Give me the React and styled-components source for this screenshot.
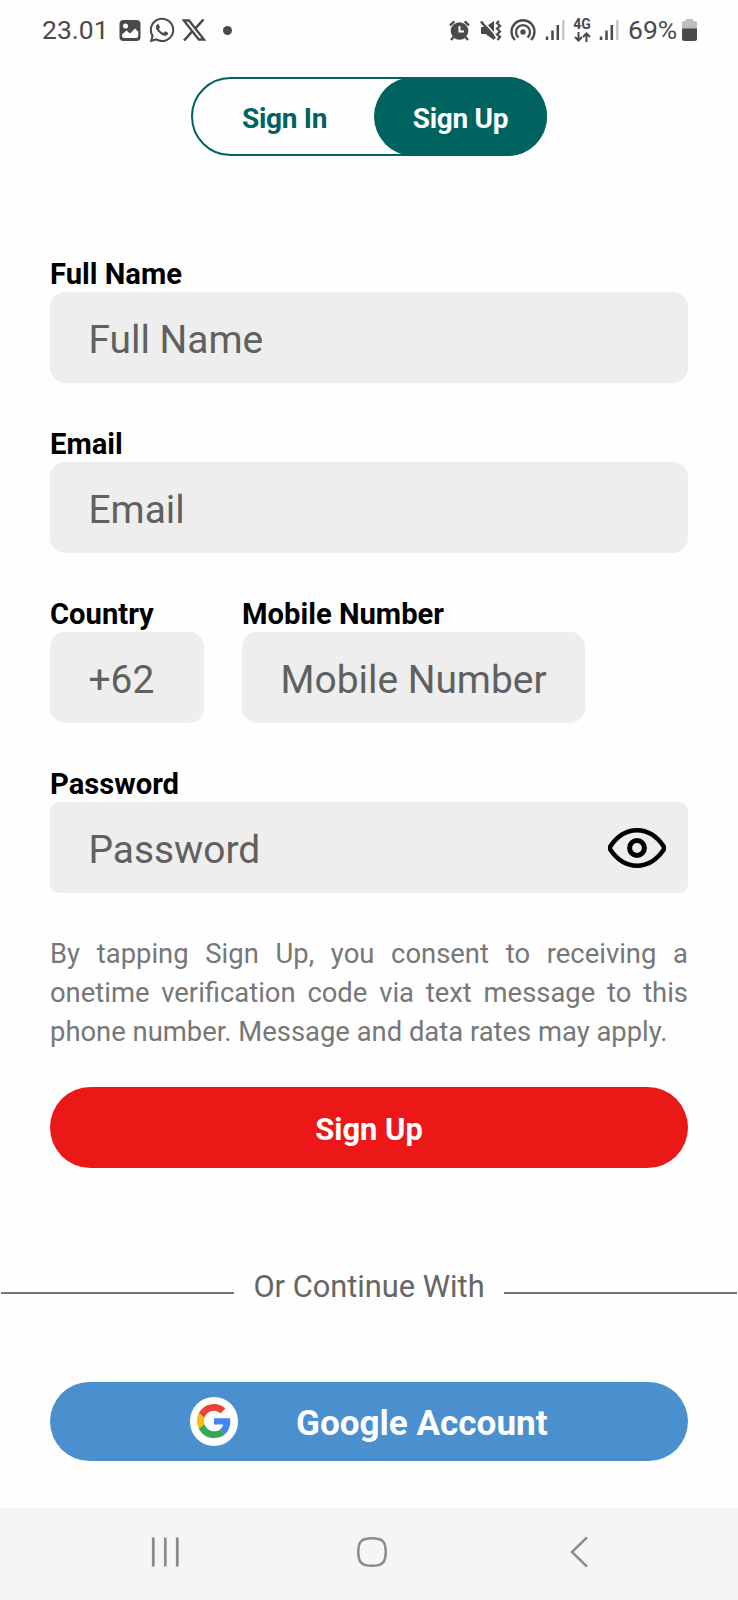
import React from 'react';
import styled, { createGlobalStyle } from 'styled-components';
import { FaWhatsapp } from 'react-icons/fa';

const GlobalStyle = createGlobalStyle`
  * { box-sizing: border-box; }
  body { margin: 0; background: #fefefe; font-family: Roboto, "Liberation Sans", sans-serif; }
  svg { display: block; flex: none; }
  button { font-family: inherit; border: 0; padding: 0; margin: 0; }
`;

const Screen = styled.div`
  width: 738px;
  height: 1600px;
  display: flex;
  flex-direction: column;
  background: #fefefe;
  overflow: hidden;
`;

const StatusBar = styled.header`
  height: 77px;
  padding: 10px 41px 27px 42px;
  display: flex;
  justify-content: space-between;
  align-items: center;
  color: #4a4a4a;
`;

const StatusGroup = styled.div`
  display: flex;
  align-items: center;
`;

const StatusText = styled.span`
  font-size: 26.5px;
  line-height: 40px;
  width: ${(p) => p.$width};
  white-space: nowrap;
`;

const Slot = styled.span`
  display: flex;
  margin-left: ${(p) => p.$gap}px;
`;

const Dot = styled.span`
  width: 9px;
  height: 9px;
  border-radius: 50%;
  background: #4a4a4a;
  margin-left: 17px;
`;

const Network = styled.span`
  display: flex;
  flex-direction: column;
  align-items: center;
  width: 18px;
  margin-left: 8px;
  gap: 2px;
`;

const NetworkText = styled.span`
  font-size: 14px;
  font-weight: 700;
  line-height: 11px;
`;

const Toggle = styled.div`
  width: 356px;
  height: 79px;
  margin-left: 191px;
  flex: none;
  display: flex;
  border: 2px solid #01635f;
  border-radius: 40px;
`;

const Tab = styled.button`
  flex: ${(p) => (p.$active ? 'none' : '1')};
  width: ${(p) => (p.$active ? '173px' : 'auto')};
  margin: ${(p) => (p.$active ? '-2px -2px -2px 0' : '-2px 0')};
  padding: ${(p) => (p.$active ? '5px 0 0' : '5px 0 0 2px')};
  border-radius: 40px;
  background: ${(p) => (p.$active ? '#01635f' : 'transparent')};
  color: ${(p) => (p.$active ? '#fefefe' : '#01635f')};
  font-size: 28px;
  letter-spacing: -0.3px;
  line-height: 36px;
  font-weight: 700;
`;

const Form = styled.main`
  display: flex;
  flex-direction: column;
  padding: 101px 50px 0;
`;

const Field = styled.div`
  width: ${(p) => p.$width || '100%'};
  height: 170px;
`;

const Label = styled.div`
  height: 35px;
  font-size: 29.2px;
  line-height: 34px;
  font-weight: 700;
  color: #000;
  white-space: nowrap;
`;

const InputBox = styled.div`
  height: 91px;
  padding: 4px 22.5px 0 38.5px;
  display: flex;
  align-items: center;
  justify-content: space-between;
  border-radius: ${(p) => p.$radius || 15}px;
  background: #eee;
  color: #606060;
  font-size: 38.9px;
  line-height: 47px;
  white-space: nowrap;

  svg { margin-top: -3px; }
`;

const PhoneRow = styled.div`
  display: flex;
  gap: 38.5px;
`;

const Consent = styled.p`
  margin: -2px 0 0;
  height: 117px;
  font-size: 27.4px;
  line-height: 39px;
  color: #777;
  text-align: justify;
`;

const SubmitButton = styled.button`
  margin-top: 35px;
  height: 81px;
  border-radius: 41px;
  padding-top: 3px;
  background: #eb1817;
  color: #fefefe;
  font-size: 30.9px;
  font-weight: 700;
`;

const Divider = styled.div`
  height: 50px;
  margin: 92px 1px 0;
  display: flex;
  align-items: center;
  justify-content: space-between;
`;

const Rule = styled.span`
  width: 233px;
  height: 2px;
  margin-top: 16px;
  background: #757575;
`;

const DividerText = styled.span`
  padding-top: 4px;
  font-size: 30.8px;
  line-height: 46px;
  color: #666;
  white-space: nowrap;
`;

const GoogleButton = styled.button`
  height: 78.5px;
  margin: 72px 50px 0;
  padding: 0 0 0 139.5px;
  display: flex;
  align-items: center;
  gap: 58px;
  border-radius: 40px;
  background: #4a8fce;
  color: #fefefe;
`;

const GoogleBadge = styled.span`
  width: 48.5px;
  height: 48.5px;
  border-radius: 50%;
  display: flex;
  align-items: center;
  justify-content: center;
  background: #fefefe;
`;

const GoogleText = styled.span`
  font-size: 35.1px;
  line-height: 40px;
  padding-top: 4px;
  font-weight: 700;
  white-space: nowrap;
`;

const NavBar = styled.nav`
  margin-top: auto;
  height: 92px;
  padding: 0 150px 4px 151px;
  display: grid;
  grid-template-columns: 206px 1fr auto;
  align-items: center;
  background: #f5f5f5;
`;

const ink = '#4a4a4a';

const ImageIcon = () => (
  <svg width="22" height="21" viewBox="0 0 22 21">
    <rect x=".5" y="0" width="21" height="21" rx="4" fill={ink} />
    <circle cx="6.5" cy="6" r="2.5" fill="#fefefe" />
    <path d="M3 14.5 7.500 10.500l3.500 3 5-5 3.200 3V16a2 2 0 0 1-2 2H5a2 2 0 0 1-2-2Z" fill="#fefefe" />
  </svg>
);

const XIcon = () => (
  <svg width="24" height="22" viewBox="0 0 24 22" fill="none" stroke={ink}>
    <path d="M1.800 1.500H7L22 20.500h-5.200Z" strokeWidth="2.300" />
    <path d="M21.500.5 13.200 9.700M10 12.700 2 21.500" strokeWidth="2.500" />
  </svg>
);

const AlarmIcon = () => (
  <svg width="21" height="21" viewBox="0 0 21 21">
    <circle cx="10.5" cy="11" r="8.8" fill={ink} />
    <path d="M1 5.300 5.300 1.300M20 5.300 15.700 1.300M4.500 17 2 20M16.500 17 19 20" stroke={ink} strokeWidth="2.3" />
    <path d="M10.500 6v5.500H15" stroke="#fefefe" strokeWidth="2" fill="none" />
  </svg>
);

const MuteIcon = () => (
  <svg width="22" height="21" viewBox="0 0 22 21">
    <path d="M1 7h4.500L14 1v19L5.500 14H1Z" fill={ink} />
    <path d="M2.500 0 16 15.500" stroke="#fefefe" strokeWidth="1.5" />
    <path d="M1 1.500 15 18.500" stroke={ink} strokeWidth="2.5" />
    <path d="m19 1-2 2 3 3-3 2.500 3 3-3 3 3 2.500-2.500 3" stroke={ink} strokeWidth="2.2" fill="none" />
  </svg>
);

const HotspotIcon = () => (
  <svg width="26" height="22" viewBox="0 0 26 22" fill="none" stroke={ink} strokeWidth="2.3">
    <circle cx="13" cy="13" r="2.7" fill={ink} stroke="none" />
    <path d="M8.500 18.500a7 7 0 1 1 9 0" />
    <path d="M5 21a11.500 11.500 0 1 1 16 0" />
  </svg>
);

const SignalIcon = () => (
  <svg width="20" height="20" viewBox="0 0 20 20">
    <path d="M2 20v-3.500M7.500 20v-9.500M12.800 20V5" stroke={ink} strokeWidth="2.5" />
    <path d="M18.300 20V0" stroke="#c3c3c3" strokeWidth="2.2" />
  </svg>
);

const ArrowsIcon = () => (
  <svg width="17" height="10" viewBox="0 0 17 10" fill="none" stroke={ink} strokeWidth="2">
    <path d="M4.500 0v8M1 5l3.500 3.500L8 5M12.500 10V2M9 5l3.500-3.500L16 5" />
  </svg>
);

const BatteryIcon = () => (
  <svg width="15" height="22" viewBox="0 0 15 22">
    <path d="M0 10V4a2 2 0 0 1 2-2h2V0h7v2h2a2 2 0 0 1 2 2v6Z" fill="#bdbdbd" />
    <path d="M0 9.500h15v10a2.500 2.500 0 0 1-2.500 2.500h-10A2.500 2.500 0 0 1 0 19.500Z" fill={ink} />
  </svg>
);

const EyeIcon = () => (
  <svg width="58" height="40" viewBox="0 0 58 40" fill="none" stroke="#000">
    <path d="M2.200 18.500C9 8.500 18 2.300 29 2.300S49 8.500 55.800 18.500v3C49 31.500 40 37.700 29 37.700S9 31.500 2.200 21.500Z" strokeWidth="4.5" strokeLinejoin="round" />
    <circle cx="29" cy="20" r="7.4" strokeWidth="5" />
  </svg>
);

const GoogleIcon = () => (
  <svg width="34" height="34" viewBox="0 0 48 48">
    <path fill="#EA4335" d="M24 9.500c3.540 0 6.710 1.220 9.210 3.600l6.850-6.850C35.900 2.380 30.470 0 24 0 14.620 0 6.510 5.380 2.560 13.220l7.980 6.190C12.430 13.720 17.740 9.500 24 9.500z" />
    <path fill="#4285F4" d="M46.980 24.550c0-1.570-.15-3.090-.38-4.550H24v9.020h12.940c-.58 2.960-2.260 5.480-4.780 7.180l7.730 6c4.510-4.180 7.090-10.360 7.090-17.650z" />
    <path fill="#FBBC05" d="M10.530 28.590c-.48-1.450-.76-2.990-.76-4.590s.27-3.140.76-4.590l-7.980-6.190C.92 16.460 0 20.120 0 24c0 3.880.92 7.540 2.560 10.780l7.970-6.190z" />
    <path fill="#34A853" d="M24 48c6.480 0 11.930-2.130 15.890-5.810l-7.730-6c-2.150 1.450-4.920 2.300-8.160 2.300-6.260 0-11.570-4.220-13.470-9.910l-7.980 6.190C6.510 42.620 14.620 48 24 48z" />
  </svg>
);

const RecentsIcon = () => (
  <svg width="30" height="30" viewBox="0 0 30 30" stroke="#8b8b8b" strokeWidth="2.8">
    <path d="M2.300.5v29M14.300.5v29M26.300.5v29" />
  </svg>
);

const HomeIcon = () => (
  <svg width="30" height="30" viewBox="0 0 30 30" fill="none" stroke="#8b8b8b" strokeWidth="2.5">
    <path d="M15 1.300C25.500 1.300 28.700 4.500 28.700 15S25.500 28.700 15 28.700 1.300 25.500 1.300 15 4.500 1.300 15 1.300Z" />
  </svg>
);

const BackIcon = () => (
  <svg width="18" height="32" viewBox="0 0 18 32" fill="none" stroke="#8b8b8b" strokeWidth="2.5">
    <path d="M17 1.300 2 16l15 14.700" />
  </svg>
);

function TextField({ label, hint, width, radius, children }) {
  return (
    <Field $width={width}>
      <Label>{label}</Label>
      <InputBox $radius={radius}>
        <span>{hint}</span>
        {children}
      </InputBox>
    </Field>
  );
}

export default function App() {
  return (
    <Screen>
      <GlobalStyle />
      <StatusBar>
        <StatusGroup>
          <StatusText $width="77px">23.01</StatusText>
          <Slot $gap={0}><ImageIcon /></Slot>
          <Slot $gap={7}><FaWhatsapp size={28} /></Slot>
          <Slot $gap={6}><XIcon /></Slot>
          <Dot />
        </StatusGroup>
        <StatusGroup>
          <Slot $gap={0}><AlarmIcon /></Slot>
          <Slot $gap={10}><MuteIcon /></Slot>
          <Slot $gap={8}><HotspotIcon /></Slot>
          <Slot $gap={9}><SignalIcon /></Slot>
          <Network>
            <NetworkText>4G</NetworkText>
            <ArrowsIcon />
          </Network>
          <Slot $gap={8}><SignalIcon /></Slot>
          <Slot $gap={9}><StatusText $width="54px">69%</StatusText></Slot>
          <BatteryIcon />
        </StatusGroup>
      </StatusBar>
      <Toggle>
        <Tab>Sign In</Tab>
        <Tab $active>Sign Up</Tab>
      </Toggle>
      <Form>
        <TextField label="Full Name" hint="Full Name" />
        <TextField label="Email" hint="Email" />
        <PhoneRow>
          <TextField label="Country" hint="+62" width="153.5px" />
          <TextField label="Mobile Number" hint="Mobile Number" width="343px" />
        </PhoneRow>
        <TextField label="Password" hint="Password" radius={9}>
          <EyeIcon />
        </TextField>
        <Consent>
          By tapping Sign Up, you consent to receiving a onetime verification code via text
          message to this phone number. Message and data rates may apply.
        </Consent>
        <SubmitButton>Sign Up</SubmitButton>
      </Form>
      <Divider>
        <Rule />
        <DividerText>Or Continue With</DividerText>
        <Rule />
      </Divider>
      <GoogleButton>
        <GoogleBadge><GoogleIcon /></GoogleBadge>
        <GoogleText>Google Account</GoogleText>
      </GoogleButton>
      <NavBar>
        <RecentsIcon />
        <HomeIcon />
        <BackIcon />
      </NavBar>
    </Screen>
  );
}
